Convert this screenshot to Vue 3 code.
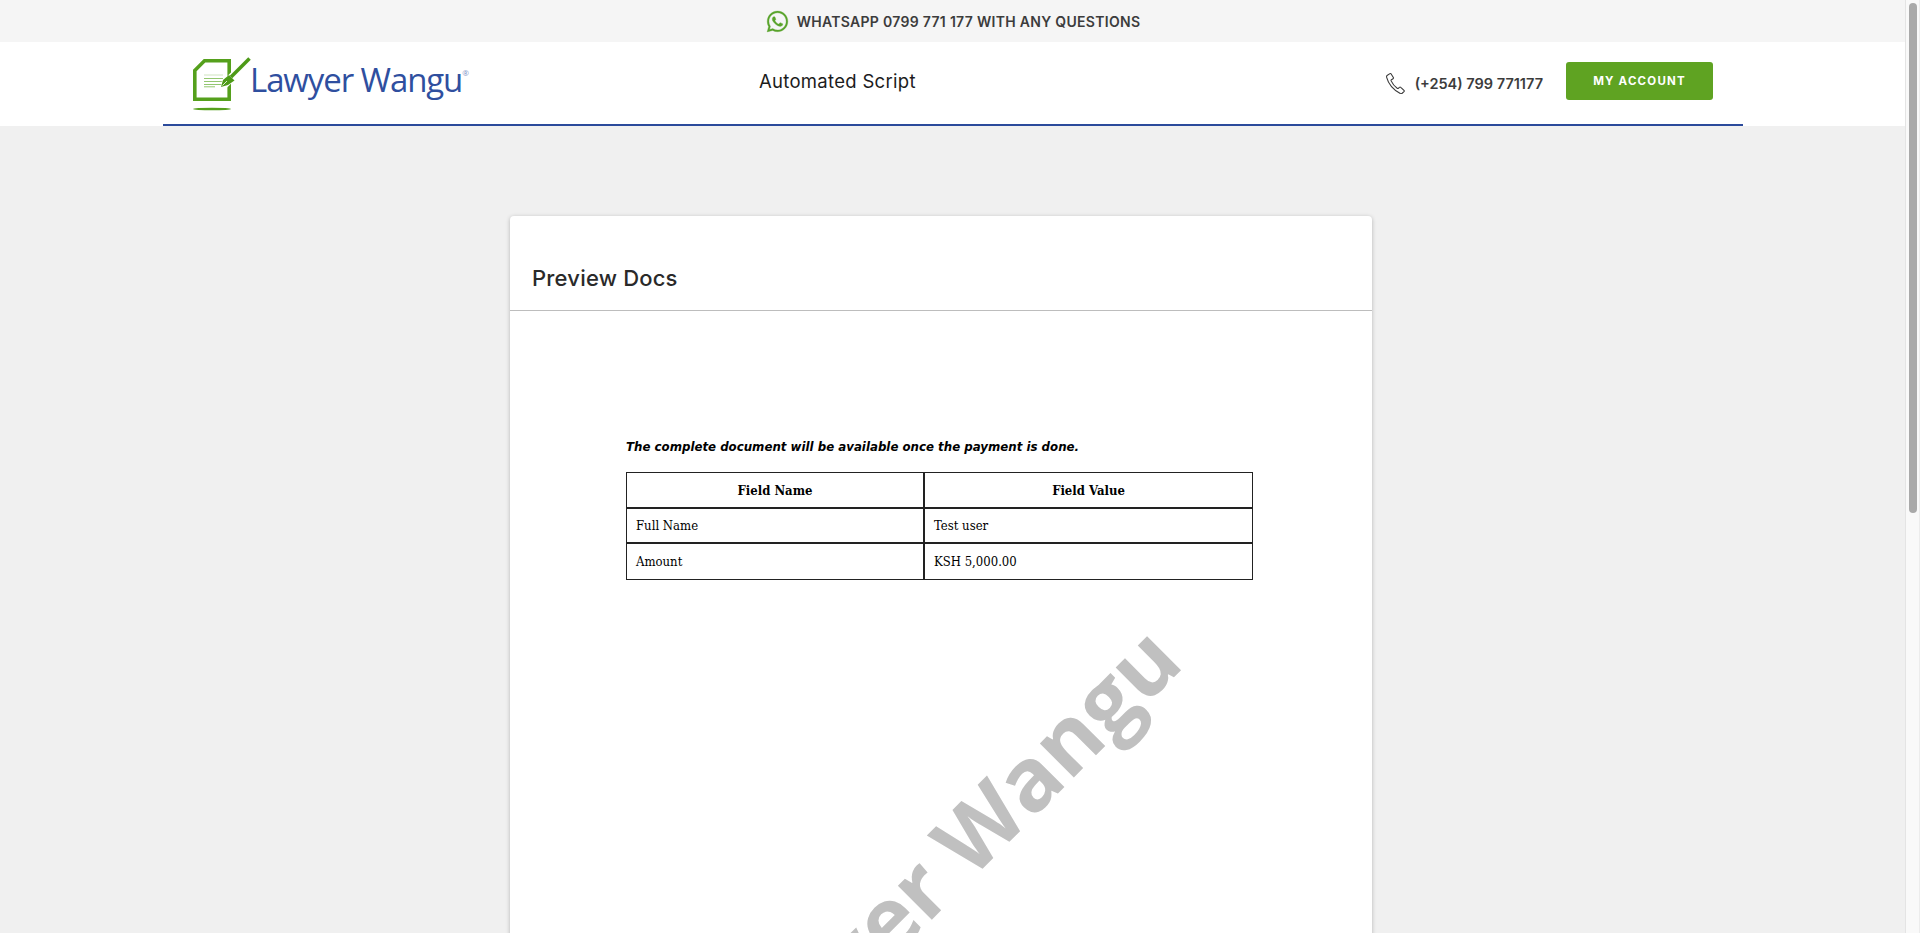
<script setup>
const rows = [
  { name: 'Full Name', value: 'Test user' },
  { name: 'Amount', value: 'KSH 5,000.00' },
]
</script>

<template>
  <div class="page">
    <div class="content">
      <div class="topbar">
        <svg class="wa-icon" viewBox="0 0 24 24" aria-hidden="true">
          <path
            fill="#58a32a"
            stroke="#58a32a"
            stroke-width="0.3"
            d="M12.04 2C6.58 2 2.13 6.45 2.13 11.91c0 1.75.46 3.45 1.32 4.95L2.05 22l5.25-1.38a9.9 9.9 0 0 0 4.74 1.21c5.46 0 9.91-4.45 9.91-9.91S17.5 2 12.04 2zm0 18.15a8.2 8.2 0 0 1-4.2-1.15l-.3-.18-3.12.82.83-3.04-.2-.31a8.23 8.23 0 0 1-1.26-4.38c0-4.54 3.7-8.24 8.25-8.24s8.24 3.7 8.24 8.24-3.7 8.24-8.24 8.24zm4.52-6.16c-.25-.12-1.47-.72-1.69-.81-.23-.08-.39-.12-.56.13-.17.25-.64.81-.78.97-.14.17-.29.19-.54.06-.25-.12-1.05-.39-1.99-1.23-.74-.66-1.23-1.47-1.38-1.72-.14-.25-.02-.38.11-.51.11-.11.25-.29.37-.43.12-.14.17-.25.25-.41.08-.17.04-.31-.02-.43-.06-.12-.56-1.34-.76-1.84-.2-.48-.41-.42-.56-.43h-.48c-.17 0-.43.06-.66.31-.23.25-.87.85-.87 2.07 0 1.22.89 2.4 1.01 2.56.12.17 1.75 2.67 4.23 3.74.59.26 1.05.41 1.41.52.59.19 1.13.16 1.56.1.48-.07 1.47-.6 1.67-1.18.21-.58.21-1.07.14-1.18-.06-.1-.22-.16-.47-.28z"
          />
        </svg>
        <span>WHATSAPP 0799 771 177 WITH ANY QUESTIONS</span>
      </div>

      <header class="header">
        <div class="header-inner">
          <a class="logo" href="#">
            <svg class="logo-mark" viewBox="0 0 62 56" aria-hidden="true">
              <path
                d="M4.800 14.500 L14.500 4.800 H39.200 V43.200 H4.800 Z"
                fill="#fff"
                stroke="#55a01c"
                stroke-width="3.600"
              />
              <path d="M14 19h19" stroke="#cfe4bf" stroke-width="1" />
              <path d="M14 22.500h19M14 25.500h19M14 28.500h18M14 30.800h11" stroke="#93c670" stroke-width="1" />
              <path d="M33 30 L60 3" stroke="#fff" stroke-width="8" />
              <path d="M41 21 L59.500 2.500" stroke="#4d9a17" stroke-width="3.600" />
              <path d="M31 31 L33 24 L39 19 L44.500 24.500 L38 29 Z" fill="#4d9a17" />
              <path d="M32.500 29.500 L37 25" stroke="#fff" stroke-width="0.8" />
              <ellipse cx="22" cy="53" rx="19" ry="1.300" fill="#55a01c" />
            </svg>
            <span class="logo-text">Lawyer Wangu<sup>®</sup></span>
          </a>
          <div class="title">Automated Script</div>
          <div class="contact">
            <svg class="phone-icon" viewBox="0 0 24 24" aria-hidden="true">
              <path
                fill="none"
                stroke="#3a3a3a"
                stroke-width="1.200"
                stroke-linejoin="round"
                d="M2.600 3.600 5.400 1.800c.5-.3 1-.2 1.300.3l2.400 3.900c.3.5.2 1-.3 1.300L7 8.400c-.5.3-.5.8-.3 1.300 1.300 2.900 3.900 6 6.600 8 .4.3.9.3 1.300 0l1.200-1c.4-.4 1-.3 1.400.1l3.500 3.300c.4.4.4.9 0 1.300l-2 1.800c-.5.4-1.300.6-2 .3C9.400 19.600 3.500 12.300 1.700 5.600c-.1-.8.2-1.600.9-2z"
              />
            </svg>
            <span class="phone">(+254) 799 771177</span>
            <button class="account-btn" type="button">MY ACCOUNT</button>
          </div>
        </div>
      </header>

      <main class="main">
        <section class="card">
          <h2 class="card-title">Preview Docs</h2>
          <div class="doc">
            <p class="notice">The complete document will be available once the payment is done.</p>
            <table class="fields">
              <thead>
                <tr>
                  <th>Field Name</th>
                  <th>Field Value</th>
                </tr>
              </thead>
              <tbody>
                <tr v-for="row in rows" :key="row.name">
                  <td>{{ row.name }}</td>
                  <td>{{ row.value }}</td>
                </tr>
              </tbody>
            </table>
            <div class="watermark">Lawyer Wangu</div>
          </div>
        </section>
      </main>
    </div>

    <div class="scrollbar" aria-hidden="true">
      <div class="scroll-thumb"></div>
    </div>
  </div>
</template>

<style scoped>
.page {
  display: flex;
  height: 100vh;
  overflow: hidden;
  background: #f0f0f0;
  font-family: "Inter", "Open Sans", sans-serif;
  color: #333;
}

.content {
  flex: 1;
  min-width: 0;
  overflow: hidden;
}

.scrollbar {
  width: 15px;
  box-sizing: border-box;
  background: #f9f9f9;
  border-left: 1px solid #e4e4e4;
  border-right: 1px solid #ececec;
  padding: 3px 2px 0 3px;
}

.scroll-thumb {
  height: 510px;
  background: #a9a9a9;
  border-radius: 4px;
}

.topbar {
  height: 42px;
  background: #f5f5f5;
  display: flex;
  align-items: center;
  justify-content: center;
  gap: 7px;
  font-size: 14px;
  font-weight: 600;
  letter-spacing: 0.3px;
  color: #3c3c3c;
}

.wa-icon {
  width: 25px;
  height: 25px;
}

.header {
  background: #fff;
  height: 84px;
}

.header-inner {
  width: 1580px;
  height: 84px;
  margin-left: 163px;
  box-sizing: border-box;
  border-bottom: 2px solid #2b4a9b;
  display: grid;
  grid-template-columns: 569px 1fr auto;
  align-items: center;
  padding: 0 30px 5px 27px;
}

.logo {
  display: flex;
  align-items: center;
  text-decoration: none;
}

.logo-mark {
  width: 62px;
  height: 56px;
  margin-top: 6px;
}

.logo-text {
  font-family: "Open Sans", sans-serif;
  font-size: 33px;
  letter-spacing: -1.1px;
  color: #2f4f9f;
  margin: -3px 0 0 -2px;
}

.logo-text sup {
  font-size: 8px;
  vertical-align: 16px;
  line-height: 0;
  color: #7f93c6;
}

.title {
  font-size: 18.500px;
  letter-spacing: 0.3px;
  font-weight: 400;
  color: #1c1c1c;
}

.contact {
  display: flex;
  align-items: center;
}

.phone-icon {
  width: 22px;
  height: 22px;
  margin-right: 8px;
  margin-top: 4px;
}

.phone {
  font-size: 14.500px;
  font-weight: 600;
  color: #3c3c3c;
  margin-right: 23px;
  margin-top: 5px;
}

.account-btn {
  width: 147px;
  height: 38px;
  border: 0;
  border-radius: 3px;
  background: #5fa322;
  color: #fff;
  font-family: inherit;
  font-size: 11.500px;
  font-weight: 700;
  letter-spacing: 1.2px;
  cursor: pointer;
}

.main {
  display: flex;
  padding: 90px 0 60px 510px;
}

.card {
  width: 862px;
  background: #fff;
  border-radius: 4px;
  box-shadow: 0 1px 4px rgba(0, 0, 0, 0.25);
}

.card-title {
  margin: 0;
  height: 95px;
  box-sizing: border-box;
  padding: 49px 22px 0;
  border-bottom: 1px solid #bdbdbd;
  font-size: 22px;
  font-weight: 450;
  letter-spacing: 0.2px;
  color: #2a2a2a;
}

.doc {
  position: relative;
  height: 1400px;
  padding: 129px 0 0 116px;
  box-sizing: border-box;
  overflow: hidden;
}

.notice {
  margin: 0 0 18px;
  font-family: "DejaVu Sans", sans-serif;
  font-size: 11.800px;
  font-weight: 700;
  font-style: italic;
  color: #000;
}

.fields {
  width: 627px;
  box-sizing: border-box;
  border-collapse: separate;
  border-spacing: 0;
  border: 1px solid #222;
  font-family: "DejaVu Serif Condensed", "DejaVu Serif", serif;
  font-size: 13px;
  color: #000;
}

.fields th,
.fields td {
  height: 35px;
  padding: 0 9px;
  box-sizing: border-box;
  text-align: left;
  border-right: 2px solid #222;
  border-bottom: 2px solid #222;
}

.fields th:last-child,
.fields td:last-child {
  border-right: 0;
}

.fields tbody tr:last-child td {
  border-bottom: 0;
}

.fields th {
  height: 36px;
  text-align: center;
}

.fields th:first-child {
  width: 298px;
}

.watermark {
  position: absolute;
  left: 100px;
  top: 499px;
  font-family: "Open Sans", sans-serif;
  font-size: 88px;
  font-weight: 700;
  color: #c0c0c0;
  white-space: nowrap;
  transform: rotate(-45deg);
}
</style>

<style>
html,
body {
  margin: 0;
  overflow: hidden;
}
</style>
